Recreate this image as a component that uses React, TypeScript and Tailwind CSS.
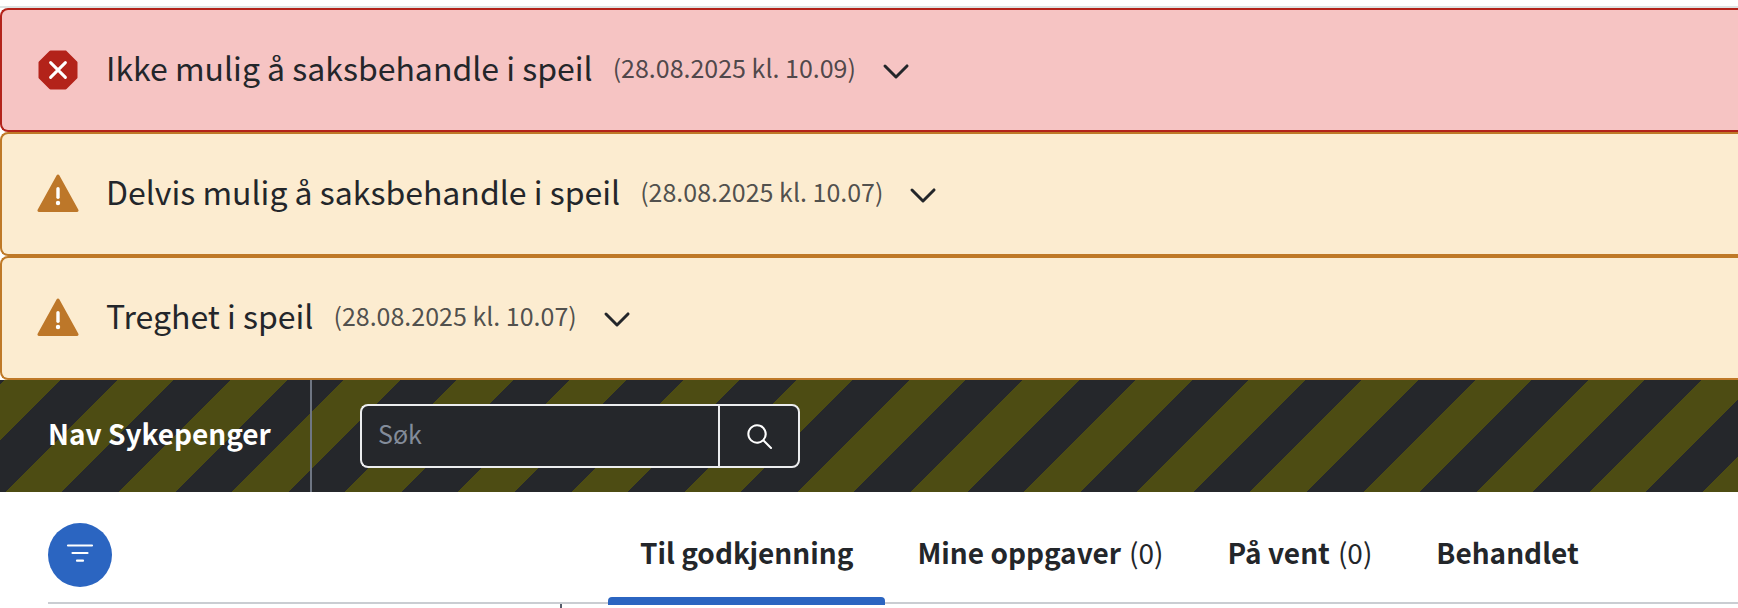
type Alert = { variant: 'error' | 'warning'; title: string; time: string };

const alerts: Alert[] = [
  { variant: 'error', title: 'Ikke mulig å saksbehandle i speil', time: '28.08.2025 kl. 10.09' },
  { variant: 'warning', title: 'Delvis mulig å saksbehandle i speil', time: '28.08.2025 kl. 10.07' },
  { variant: 'warning', title: 'Treghet i speil', time: '28.08.2025 kl. 10.07' },
];

const tabs: { label: string; count?: number }[] = [
  { label: 'Til godkjenning' },
  { label: 'Mine oppgaver', count: 0 },
  { label: 'På vent', count: 0 },
  { label: 'Behandlet' },
];

function ErrorIcon() {
  return (
    <svg viewBox="0 0 24 24" className="size-12 shrink-0" aria-hidden="true">
      <path
        fill="#b3231a"
        d="M7.74 2.47a.75.75 0 0 1 .53-.22h7.46c.2 0 .39.08.53.22l5.27 5.27c.14.14.22.33.22.53v7.46c0 .2-.08.39-.22.53l-5.27 5.27a.75.75 0 0 1-.53.22H8.27a.75.75 0 0 1-.53-.22l-5.27-5.27a.75.75 0 0 1-.22-.53V8.27c0-.2.08-.39.22-.53z"
      />
      <path d="m8.3 8.3 7.4 7.4m0-7.4-7.4 7.4" fill="none" stroke="#fff" strokeWidth="1.5" strokeLinecap="round" />
    </svg>
  );
}

function WarningIcon() {
  return (
    <svg viewBox="0 0 24 24" className="size-12 shrink-0" aria-hidden="true">
      <path
        fill="#bd7729"
        d="M12 2.25a.75.75 0 0 1 .656.387l9.527 17.25A.75.75 0 0 1 21.526 21H2.474a.75.75 0 0 1-.657-1.113l9.527-17.25A.75.75 0 0 1 12 2.25"
      />
      <path d="M12 9.4v4.2" stroke="#fff" strokeWidth="1.7" strokeLinecap="round" />
      <circle cx="12" cy="16.5" r="1.1" fill="#fff" />
    </svg>
  );
}

function AlertBanner({ variant, title, time }: Alert) {
  const isError = variant === 'error';
  return (
    <section
      className={
        isError
          ? 'flex h-[124px] items-center gap-6 rounded-l-lg border-2 border-r-0 border-[#b3231a] bg-[#f6c4c3] px-8'
          : 'flex h-[124px] items-center gap-6 rounded-l-lg border-2 border-r-0 border-[#bf7927] bg-[#fcecd0] px-8'
      }
    >
      {isError ? <ErrorIcon /> : <WarningIcon />}
      <div className="flex items-center gap-4">
        <div className="flex items-center gap-5 pb-1.5 whitespace-nowrap">
          <h2 className="text-[32px] leading-10">{title}</h2>
          <span className="text-[25px] leading-10 text-[#23262a]/80">({time})</span>
        </div>
        <button type="button" aria-label="Vis mer" className="shrink-0">
          <svg viewBox="0 0 24 24" className="size-12" aria-hidden="true">
            <path
              fill="currentColor"
              d="M5.97 9.47a.75.75 0 0 1 1.06 0L12 14.44l4.97-4.97a.75.75 0 1 1 1.06 1.06l-5.5 5.5a.75.75 0 0 1-1.06 0l-5.5-5.5a.75.75 0 0 1 0-1.06"
            />
          </svg>
        </button>
      </div>
    </section>
  );
}

function Header() {
  return (
    <header className="flex h-28 items-stretch bg-[repeating-linear-gradient(135deg,#25272b_0px,#25272b_3px,#4d4c13_3px,#4d4c13_43px,#25272b_43px,#25272b_80px)]">
      <a
        href="#"
        className="flex w-[312px] shrink-0 items-center border-r-2 border-[#6f7683] pb-1.5 pl-12 text-[28px] leading-10 font-bold whitespace-nowrap text-white"
      >
        Nav Sykepenger
      </a>
      <form role="search" className="ml-12 flex w-[440px] self-center">
        <input
          type="text"
          aria-label="Søk"
          placeholder="Søk"
          className="h-16 min-w-0 flex-1 rounded-l-lg border-2 border-r-0 border-[#ecedef] bg-[#25272b] px-4 pb-1.5 text-[25px] text-white placeholder:text-[#838c9a]"
        />
        <button
          type="button"
          aria-label="Søk"
          className="flex h-16 w-[82px] items-center justify-center rounded-r-lg border-2 border-[#ecedef] bg-[#25272b] text-white"
        >
          <svg viewBox="0 0 24 24" className="size-8" aria-hidden="true">
            <path
              fill="currentColor"
              fillRule="evenodd"
              d="M10.5 3.25a7.25 7.25 0 1 0 4.569 12.88l5.411 5.41a.75.75 0 1 0 1.06-1.06l-5.41-5.411A7.25 7.25 0 0 0 10.5 3.25M4.75 10.5a5.75 5.75 0 1 1 11.5 0 5.75 5.75 0 0 1-11.5 0"
            />
          </svg>
        </button>
      </form>
    </header>
  );
}

function TabBar() {
  return (
    <div className="ml-12 flex h-28 border-b-2 border-[#cacdd2]">
      <div className="w-[560px] shrink-0 pt-[31px]">
        <button
          type="button"
          aria-label="Filter"
          className="flex size-16 items-center justify-center rounded-full bg-[#2b65c1] text-white"
        >
          <svg viewBox="0 0 32 32" className="size-8" aria-hidden="true">
            <path d="M4 6.5h24M8.5 14h15M13 21.7h6" fill="none" stroke="currentColor" strokeWidth="2.2" strokeLinecap="round" />
          </svg>
        </button>
      </div>
      <div role="tablist" className="flex">
        {tabs.map((tab, index) => (
          <button
            key={tab.label}
            type="button"
            role="tab"
            aria-selected={index === 0}
            className="relative flex items-start gap-2 px-8 pt-10 text-[28px] leading-10 whitespace-nowrap"
          >
            <span className="font-bold">{tab.label}</span>
            {tab.count !== undefined && <span>({tab.count})</span>}
            {index === 0 && <span className="absolute inset-x-0 -bottom-[3px] h-2 rounded-t bg-[#2b65c1]" />}
          </button>
        ))}
      </div>
    </div>
  );
}

export default function App() {
  return (
    <div className="flex min-h-screen flex-col overflow-x-hidden bg-white font-['Noto_Sans_CJK_SC',sans-serif] text-[#23262a]">
      <div className="h-2 border-b-2 border-[#dde4e4]" />
      {alerts.map((alert) => (
        <AlertBanner key={alert.title} {...alert} />
      ))}
      <Header />
      <main className="flex flex-1 flex-col">
        <TabBar />
        <div className="flex flex-1">
          <aside className="ml-12 w-[514px] border-r-2 border-[#565d6a]" />
        </div>
      </main>
    </div>
  );
}
